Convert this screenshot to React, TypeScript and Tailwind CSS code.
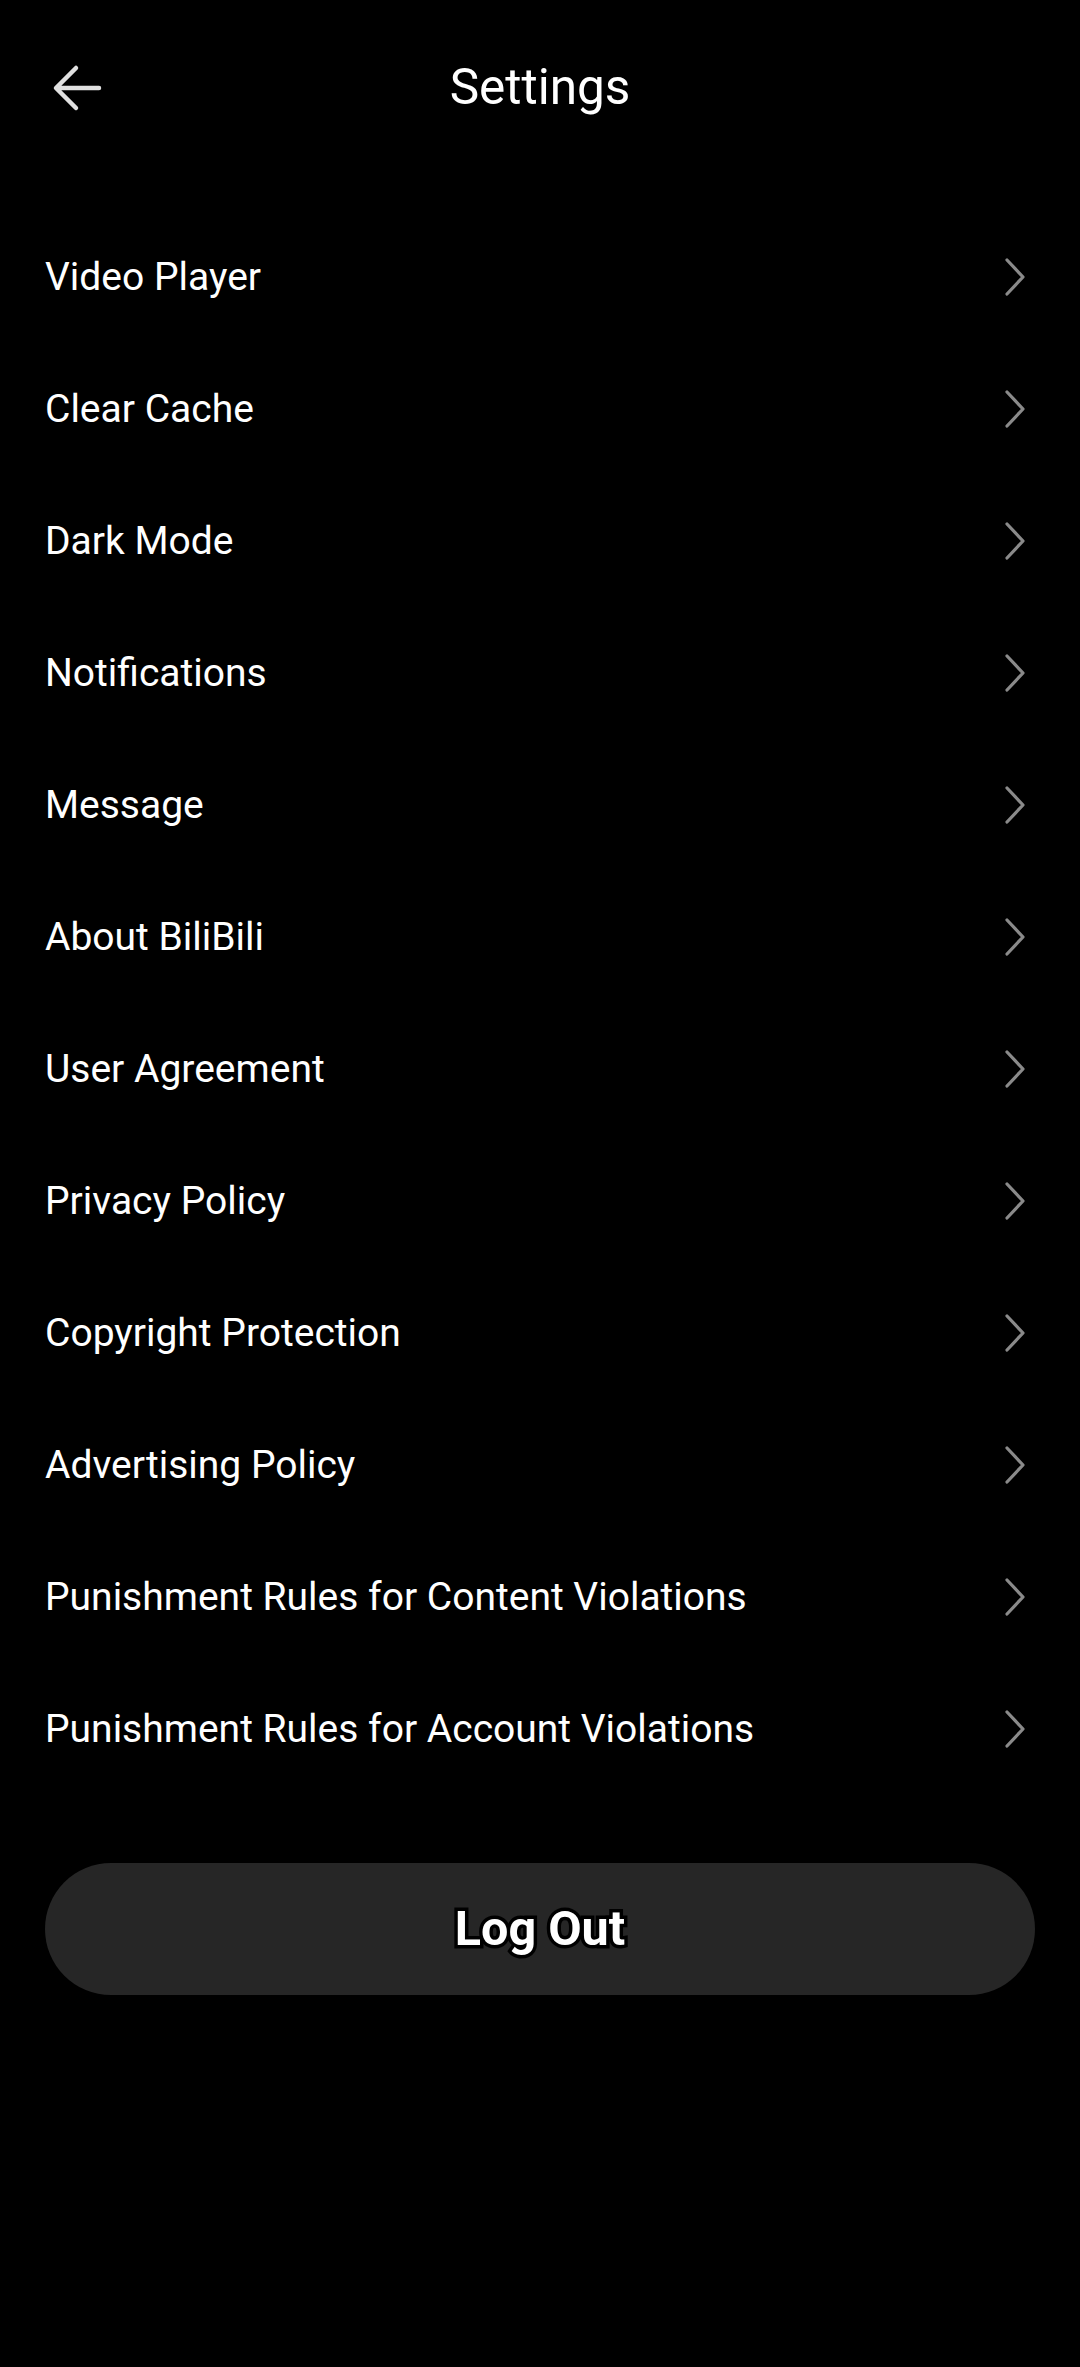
import React from "react";

const items = [
  "Video Player",
  "Clear Cache",
  "Dark Mode",
  "Notifications",
  "Message",
  "About BiliBili",
  "User Agreement",
  "Privacy Policy",
  "Copyright Protection",
  "Advertising Policy",
  "Punishment Rules for Content Violations",
  "Punishment Rules for Account Violations",
];

function Chevron() {
  return (
    <svg width="22" height="40" viewBox="0 0 22 40" fill="none">
      <polyline
        points="3,3 19,20 3,37"
        stroke="#8a8a8a"
        strokeWidth="3.2"
        strokeLinecap="round"
        strokeLinejoin="round"
      />
    </svg>
  );
}

function BackArrow() {
  return (
    <svg width="50" height="48" viewBox="0 0 50 48" fill="none">
      <path
        d="M47 24 H5 M24 4 L4 24 L24 44"
        stroke="#e0e0e0"
        strokeWidth="4.5"
        strokeLinecap="round"
        strokeLinejoin="round"
      />
    </svg>
  );
}

export default function App() {
  return (
    <div className="w-[1080px] h-[2367px] bg-black text-white font-['Roboto',sans-serif] flex flex-col">
      <div className="relative h-[176px] flex items-center justify-center">
        <div className="absolute left-[52px] top-[64px]">
          <BackArrow />
        </div>
        <span className="text-[49.5px] leading-none text-white">Settings</span>
      </div>
      <div className="mt-[35px] flex flex-col">
        {items.map((t) => (
          <div key={t} className="h-[132px] flex items-center justify-between pl-[45px] pr-[54px]">
            <span className="text-[39px] leading-none text-white">{t}</span>
            <Chevron />
          </div>
        ))}
      </div>
      <div className="mt-[68px] mx-[45px] h-[132px] rounded-full bg-[#262626] flex items-center justify-center">
        <span className="text-[48.5px] font-bold leading-none text-white [-webkit-text-stroke:7px_#000] [paint-order:stroke_fill]">
          Log Out
        </span>
      </div>
    </div>
  );
}
